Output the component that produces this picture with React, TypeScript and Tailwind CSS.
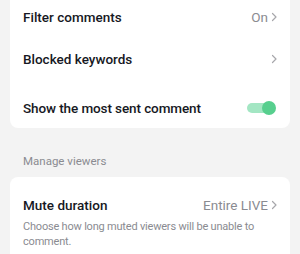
import React, { useState } from "react";

const Chevron: React.FC = () => (
  <svg width="6" height="10" viewBox="0 0 6 10" className="ml-[3px] shrink-0">
    <path d="M1.5 1.5l3.5 3.5-3.5 3.5" fill="none" stroke="#a7a7ab" strokeWidth="1.2" strokeLinecap="round" strokeLinejoin="round" />
  </svg>
);

const App: React.FC = () => {
  const [showMostSent, setShowMostSent] = useState(true);

  return (
    <div className="w-[300px] h-[254px] overflow-hidden bg-[#f3f3f3] px-[10px] font-['Roboto',sans-serif] text-[#161823]">
      {/* Comments card */}
      <div className="bg-white rounded-b-lg px-[13px]">
        <div className="h-[34px] flex items-center justify-between">
          <span className="text-[13.5px] font-medium">Filter comments</span>
          <div className="flex items-center text-[13.5px] text-[#8a8b91]">
            On
            <Chevron />
          </div>
        </div>
        <div className="h-[50px] flex items-center justify-between">
          <span className="text-[13.5px] font-medium">Blocked keywords</span>
          <Chevron />
        </div>
        <div className="h-[44px] pt-[4px] flex items-center justify-between">
          <span className="text-[13.5px] font-medium tracking-[-0.1px]">Show the most sent comment</span>
          <button
            onClick={() => setShowMostSent(!showMostSent)}
            className="relative w-[30px] h-[14px] flex items-center"
          >
            <span className={`w-[28px] h-[10px] rounded-full ${showMostSent ? "bg-[#a3e6c3]" : "bg-[#d8d8db]"}`} />
            <span
              className={`absolute top-0 w-[14px] h-[14px] rounded-full ${
                showMostSent ? "right-[1px] bg-[#57cf8e]" : "left-0 bg-white shadow"
              }`}
            />
          </button>
        </div>
      </div>

      {/* Manage viewers */}
      <div className="pt-[25px] pb-[8px] px-[13px] text-[11.5px] leading-[16px] text-[#8a8b91]">
        Manage viewers
      </div>
      <div className="bg-white rounded-lg px-[13px] pt-[19px] pb-[12px]">
        <div className="flex items-center justify-between h-[18px]">
          <span className="text-[13.5px] font-medium">Mute duration</span>
          <div className="flex items-center text-[13.5px] text-[#8a8b91]">
            Entire LIVE
            <Chevron />
          </div>
        </div>
        <p className="mt-[5px] text-[11px] leading-[15px] tracking-[-0.2px] text-[#8a8b91] pr-[10px]">
          Choose how long muted viewers will be unable to comment.
        </p>
      </div>
    </div>
  );
};

export default App;
